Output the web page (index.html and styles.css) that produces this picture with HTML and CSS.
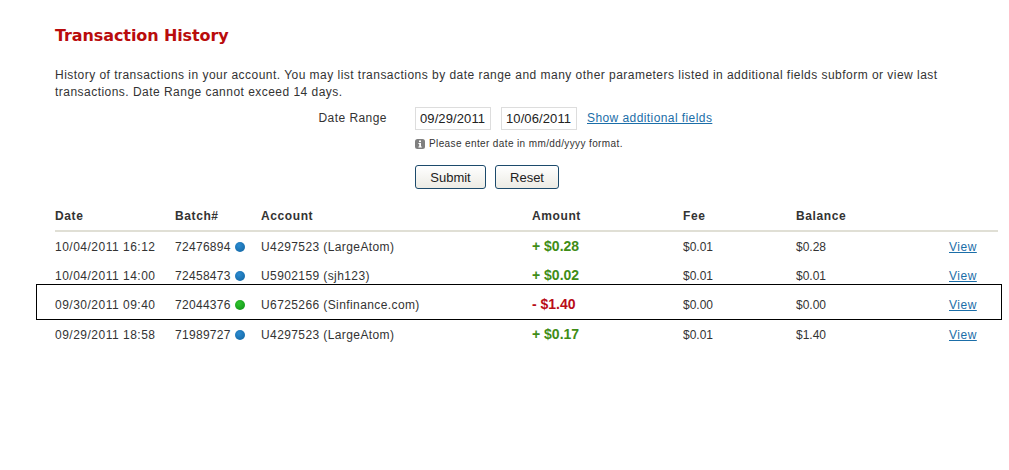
FILE: index.html
```html
<!DOCTYPE html>
<html lang="en">
<head>
  <meta charset="UTF-8" />
  <title>Transaction History</title>
  <link rel="stylesheet" href="styles.css">
</head>
<body>
  <div class="container">
    <h1>Transaction History</h1>
    <p class="intro">History of transactions in your account. You may list transactions by date range and many other parameters listed in additional fields subform or view last transactions. Date Range cannot exceed 14 days.</p>

    <form class="filter">
      <div class="filter-label">Date Range</div>
      <div class="filter-fields">
        <div class="date-row">
          <input type="text" class="date-input" value="09/29/2011" />
          <input type="text" class="date-input" value="10/06/2011" />
          <a href="#" class="more-link">Show additional fields</a>
        </div>
        <div class="hint">
          <svg class="hint-icon" width="10" height="10" viewBox="0 0 10 10">
            <rect width="10" height="10" rx="2.5" fill="#7f7f7f" />
            <rect x="4" y="1.5" width="2" height="1.6" fill="#fff" />
            <path d="M3.4 4h2.6v3.6h.8v1H3.4v-1h.8V5h-.8z" fill="#fff" />
          </svg>
          Please enter date in mm/dd/yyyy format.
        </div>
        <div class="buttons">
          <button type="button" class="btn btn-submit">Submit</button>
          <button type="button" class="btn btn-reset">Reset</button>
        </div>
      </div>
    </form>

    <div class="table">
      <div class="row head">
        <div>Date</div>
        <div>Batch#</div>
        <div>Account</div>
        <div>Amount</div>
        <div>Fee</div>
        <div>Balance</div>
        <div></div>
      </div>
      <div class="row">
        <div class="when">10/04/2011 16:12</div>
        <div class="batch">72476894 <span class="dot blue"></span></div>
        <div class="acct">U4297523 (LargeAtom)</div>
        <div class="amount plus">+ $0.28</div>
        <div>$0.01</div>
        <div>$0.28</div>
        <div class="view"><a href="#">View</a></div>
      </div>
      <div class="row">
        <div class="when">10/04/2011 14:00</div>
        <div class="batch">72458473 <span class="dot blue"></span></div>
        <div class="acct">U5902159 (sjh123)</div>
        <div class="amount plus">+ $0.02</div>
        <div>$0.01</div>
        <div>$0.01</div>
        <div class="view"><a href="#">View</a></div>
      </div>
      <div class="row marked">
        <div class="when">09/30/2011 09:40</div>
        <div class="batch">72044376 <span class="dot green"></span></div>
        <div class="acct">U6725266 (Sinfinance.com)</div>
        <div class="amount minus">- $1.40</div>
        <div>$0.00</div>
        <div>$0.00</div>
        <div class="view"><a href="#">View</a></div>
      </div>
      <div class="row">
        <div class="when">09/29/2011 18:58</div>
        <div class="batch">71989727 <span class="dot blue"></span></div>
        <div class="acct">U4297523 (LargeAtom)</div>
        <div class="amount plus">+ $0.17</div>
        <div>$0.01</div>
        <div>$1.40</div>
        <div class="view"><a href="#">View</a></div>
      </div>
    </div>
  </div>
</body>
</html>
```

FILE: styles.css
```css
body {
  font-family: "Liberation Sans", Arial, sans-serif;
  font-size: 12px;
  margin: 0;
  padding: 0;
  background: #fff;
  color: #333;
}
a {
  color: #1b6ea8;
}
.container {
  width: 943px;
  margin-left: 55px;
  padding-top: 25px;
}
h1 {
  font-family: "DejaVu Sans", Verdana, sans-serif;
  font-size: 16px;
  line-height: 21px;
  font-weight: bold;
  letter-spacing: -0.1px;
  color: #b90c0c;
  margin: 0;
}
.intro {
  width: 900px;
  margin: 21px 0 0;
  line-height: 17px;
  letter-spacing: 0.47px;
}
.filter {
  display: flex;
  margin-top: 6px;
}
.filter-label {
  width: 360px;
  box-sizing: border-box;
  padding: 4px 28px 0 0;
  text-align: right;
  letter-spacing: 0.45px;
  line-height: 15px;
}
.date-row {
  display: flex;
  align-items: center;
  gap: 10px;
}
.date-input {
  width: 76px;
  height: 23px;
  box-sizing: border-box;
  border: 1px solid #ddd;
  padding: 0 4px;
  font-family: "Liberation Sans", Arial, sans-serif;
  font-size: 13px;
  letter-spacing: 0.1px;
  color: #222;
}
.more-link {
  letter-spacing: 0.42px;
  margin-top: -2px;
}
.hint {
  display: flex;
  align-items: center;
  gap: 4px;
  margin-top: 7px;
  font-size: 10px;
  line-height: 14px;
  letter-spacing: 0.38px;
}
.buttons {
  display: flex;
  gap: 9px;
  margin-top: 14px;
}
.btn {
  height: 24px;
  box-sizing: border-box;
  padding: 0;
  border: 1px solid #1c4a6b;
  border-radius: 3px;
  background: linear-gradient(#fff, #ecebe4);
  font-family: "Liberation Sans", Arial, sans-serif;
  font-size: 13px;
  color: #222;
}
.btn-submit {
  width: 71px;
}
.btn-reset {
  width: 64px;
}
.table {
  margin-top: 15px;
}
.row {
  display: grid;
  grid-template-columns: 120px 86px 271px 151px 113px 153px 49px;
  align-items: center;
  height: 29.5px;
}
.row.head {
  height: 28px;
  font-weight: bold;
  letter-spacing: 0.6px;
  border-bottom: 2px solid #e0dfd5;
  box-sizing: border-box;
  padding-bottom: 2px;
}
.row.marked {
  box-sizing: border-box;
  height: 36px;
  margin: -7px -4px 0.5px -19px;
  padding: 6px 3px 0 18px;
  border: 1px solid #000;
}
.when {
  letter-spacing: 0.5px;
}
.acct {
  letter-spacing: 0.4px;
}
.view {
  letter-spacing: 0.5px;
}
.batch {
  display: flex;
  align-items: center;
  gap: 4px;
  letter-spacing: 0.3px;
}
.dot {
  width: 10px;
  height: 10px;
  border-radius: 50%;
}
.dot.blue {
  background: radial-gradient(circle at 40% 35%, #2b8bd0, #11639f);
}
.dot.green {
  background: radial-gradient(circle at 40% 35%, #2fc52f, #0c8c14);
}
.amount {
  font-size: 14px;
  font-weight: bold;
  margin-top: -2px;
}
.plus {
  color: #3f8d17;
}
.minus {
  color: #b90c18;
}
```
